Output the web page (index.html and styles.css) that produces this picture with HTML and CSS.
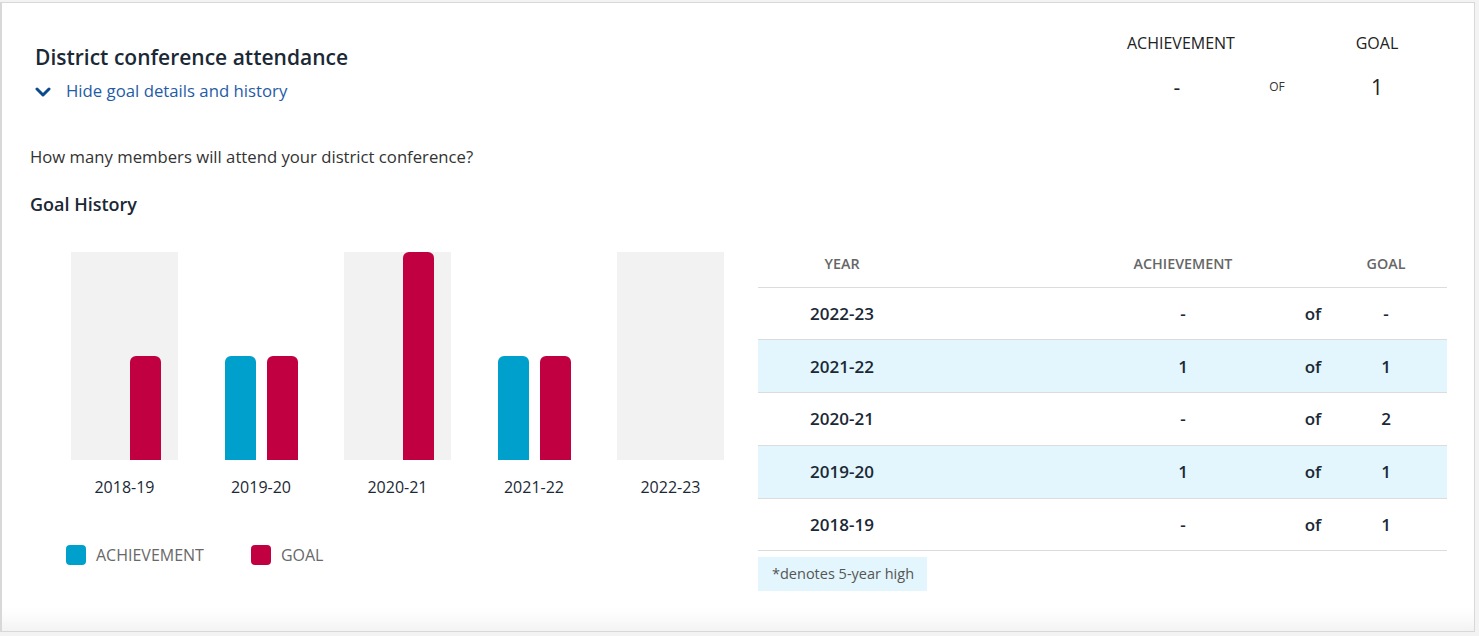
FILE: index.html
```html
<!DOCTYPE html>
<html lang="en">
<head>
<meta charset="utf-8">
<title>District conference attendance</title>
<link rel="stylesheet" href="styles.css">
</head>
<body>
<div class="card">
  <div class="header">
    <div class="title-block">
      <h2 class="title">District conference attendance</h2>
      <a class="toggle" href="#">
        <svg class="chev" width="16" height="10" viewBox="0 0 16 10"><polyline points="2,2 8,8 14,2" fill="none" stroke="#0b4a8f" stroke-width="3" stroke-linecap="round" stroke-linejoin="round"/></svg>
        <span>Hide goal details and history</span>
      </a>
    </div>
    <div class="summary">
      <div class="s-label">ACHIEVEMENT</div>
      <div class="s-label"></div>
      <div class="s-label">GOAL</div>
      <div class="s-value">-</div>
      <div class="s-of">OF</div>
      <div class="s-value">1</div>
    </div>
  </div>

  <p class="question">How many members will attend your district conference?</p>
  <h3 class="subhead">Goal History</h3>

  <div class="history">
    <div class="chart">
      <div class="cols">
        <div class="col">
          <div class="plot shaded"><div class="bar ach" style="height:0px"></div><div class="bar goal" style="height:104px"></div></div>
          <div class="year">2018-19</div>
        </div>
        <div class="col">
          <div class="plot"><div class="bar ach" style="height:104px"></div><div class="bar goal" style="height:104px"></div></div>
          <div class="year">2019-20</div>
        </div>
        <div class="col">
          <div class="plot shaded"><div class="bar ach" style="height:0px"></div><div class="bar goal" style="height:208px"></div></div>
          <div class="year">2020-21</div>
        </div>
        <div class="col">
          <div class="plot"><div class="bar ach" style="height:104px"></div><div class="bar goal" style="height:104px"></div></div>
          <div class="year">2021-22</div>
        </div>
        <div class="col">
          <div class="plot shaded"><div class="bar ach" style="height:0px"></div><div class="bar goal" style="height:0px"></div></div>
          <div class="year">2022-23</div>
        </div>
      </div>
      <div class="legend">
        <div class="leg-item"><span class="sw sw-ach"></span><span>ACHIEVEMENT</span></div>
        <div class="leg-item"><span class="sw sw-goal"></span><span>GOAL</span></div>
      </div>
    </div>

    <div class="table">
      <div class="row head">
        <div class="c-year">YEAR</div>
        <div class="c-ach">ACHIEVEMENT</div>
        <div class="c-goal">GOAL</div>
      </div>
      <div class="row">
        <div class="c-year">2022-23</div><div class="c-ach">-</div><div class="c-of">of</div><div class="c-goal">-</div>
      </div>
      <div class="row alt">
        <div class="c-year">2021-22</div><div class="c-ach">1</div><div class="c-of">of</div><div class="c-goal">1</div>
      </div>
      <div class="row">
        <div class="c-year">2020-21</div><div class="c-ach">-</div><div class="c-of">of</div><div class="c-goal">2</div>
      </div>
      <div class="row alt">
        <div class="c-year">2019-20</div><div class="c-ach">1</div><div class="c-of">of</div><div class="c-goal">1</div>
      </div>
      <div class="row">
        <div class="c-year">2018-19</div><div class="c-ach">-</div><div class="c-of">of</div><div class="c-goal">1</div>
      </div>
      <div class="note">*denotes 5-year high</div>
    </div>
  </div>
</div>
</body>
</html>
```

FILE: styles.css
```css
* { box-sizing: border-box; }

html, body {
  margin: 0;
  padding: 0;
}

body {
  background: #f3f3f3;
  font-family: "Open Sans", "Noto Sans", "Liberation Sans", sans-serif;
  color: #222;
}

.card {
  margin-top: 2px;
  width: 1475px;
  background: #fff;
  border: 1px solid #d8d8d8;
  border-left-width: 2px;
  padding: 0 27px 40px 28px;
  box-shadow: inset 0 -28px 22px -22px rgba(0, 0, 0, 0.07);
}

.header {
  display: flex;
  justify-content: space-between;
  align-items: flex-start;
  padding: 29px 20px 0 5px;
}

.title {
  margin: 11px 0 0;
  font-size: 21px;
  line-height: 28px;
  font-weight: 600;
  color: #1b2836;
}

.toggle {
  display: flex;
  align-items: center;
  margin-top: 8px;
  height: 24px;
  color: #1f5ca6;
  text-decoration: none;
  font-size: 16.75px;
  line-height: 24px;
}

.chev {
  margin: 2px 15px 0 0;
}

.summary {
  display: grid;
  grid-template-columns: 100px 100px 100px;
  row-gap: 19px;
  text-align: center;
}

.s-label {
  font-size: 16px;
  line-height: 22px;
  font-weight: 500;
  color: #222;
}

.s-value {
  font-size: 21px;
  line-height: 28px;
  color: #222;
}

.s-of {
  font-size: 12px;
  line-height: 28px;
  color: #333;
}

.question {
  margin: 42px 0 0;
  font-size: 16.7px;
  line-height: 24px;
  color: #333;
}

.subhead {
  margin: 23px 0 0;
  font-size: 18px;
  line-height: 24px;
  font-weight: 600;
  color: #1b2836;
}

.history {
  display: grid;
  grid-template-columns: 728px 689px;
  margin-top: 24px;
}

.chart {
  padding-top: 12px;
}

.cols {
  display: flex;
  gap: 29.5px;
  margin-left: 41px;
}

.col {
  width: 107px;
  display: flex;
  flex-direction: column;
  align-items: center;
}

.plot {
  width: 107px;
  height: 208px;
  display: flex;
  justify-content: center;
  align-items: flex-end;
  gap: 11px;
}

.plot.shaded {
  background: #f2f2f2;
}

.bar {
  width: 31px;
  border-radius: 6px 6px 0 0;
}

.bar.ach { background: #00a0cc; }
.bar.goal { background: #c10042; }

.year {
  margin-top: 16px;
  font-size: 16px;
  line-height: 22px;
  color: #1b2836;
}

.legend {
  display: flex;
  gap: 47px;
  margin: 46px 0 0 36px;
}

.leg-item {
  display: flex;
  align-items: center;
  gap: 10px;
  font-size: 16px;
  line-height: 22px;
  color: #686868;
}

.sw {
  width: 20px;
  height: 20px;
  border-radius: 4px;
}

.sw-ach { background: #00a0cc; }
.sw-goal { background: #c10042; }

.table {
  display: flex;
  flex-direction: column;
}

.row {
  display: grid;
  grid-template-columns: 168px 1fr 100px 50px 60px 86px 18px;
  align-items: center;
  height: 52.8px;
  border-bottom: 1px solid #dcdcdc;
  text-align: center;
  font-size: 17px;
  font-weight: 600;
  color: #1b2836;
}

.row.head {
  height: 47.5px;
  font-size: 14.3px;
  font-weight: 600;
  color: #666;
}

.row.alt {
  background: #e3f6fd;
}

.c-year { grid-column: 1; }
.c-ach { grid-column: 3; }
.c-of { grid-column: 5; }
.c-goal { grid-column: 6; }

.note {
  align-self: flex-start;
  margin-top: 6px;
  height: 34px;
  padding: 0 13px 0 14px;
  background: #e3f6fd;
  font-size: 14.5px;
  line-height: 34px;
  color: #555;
}
```
